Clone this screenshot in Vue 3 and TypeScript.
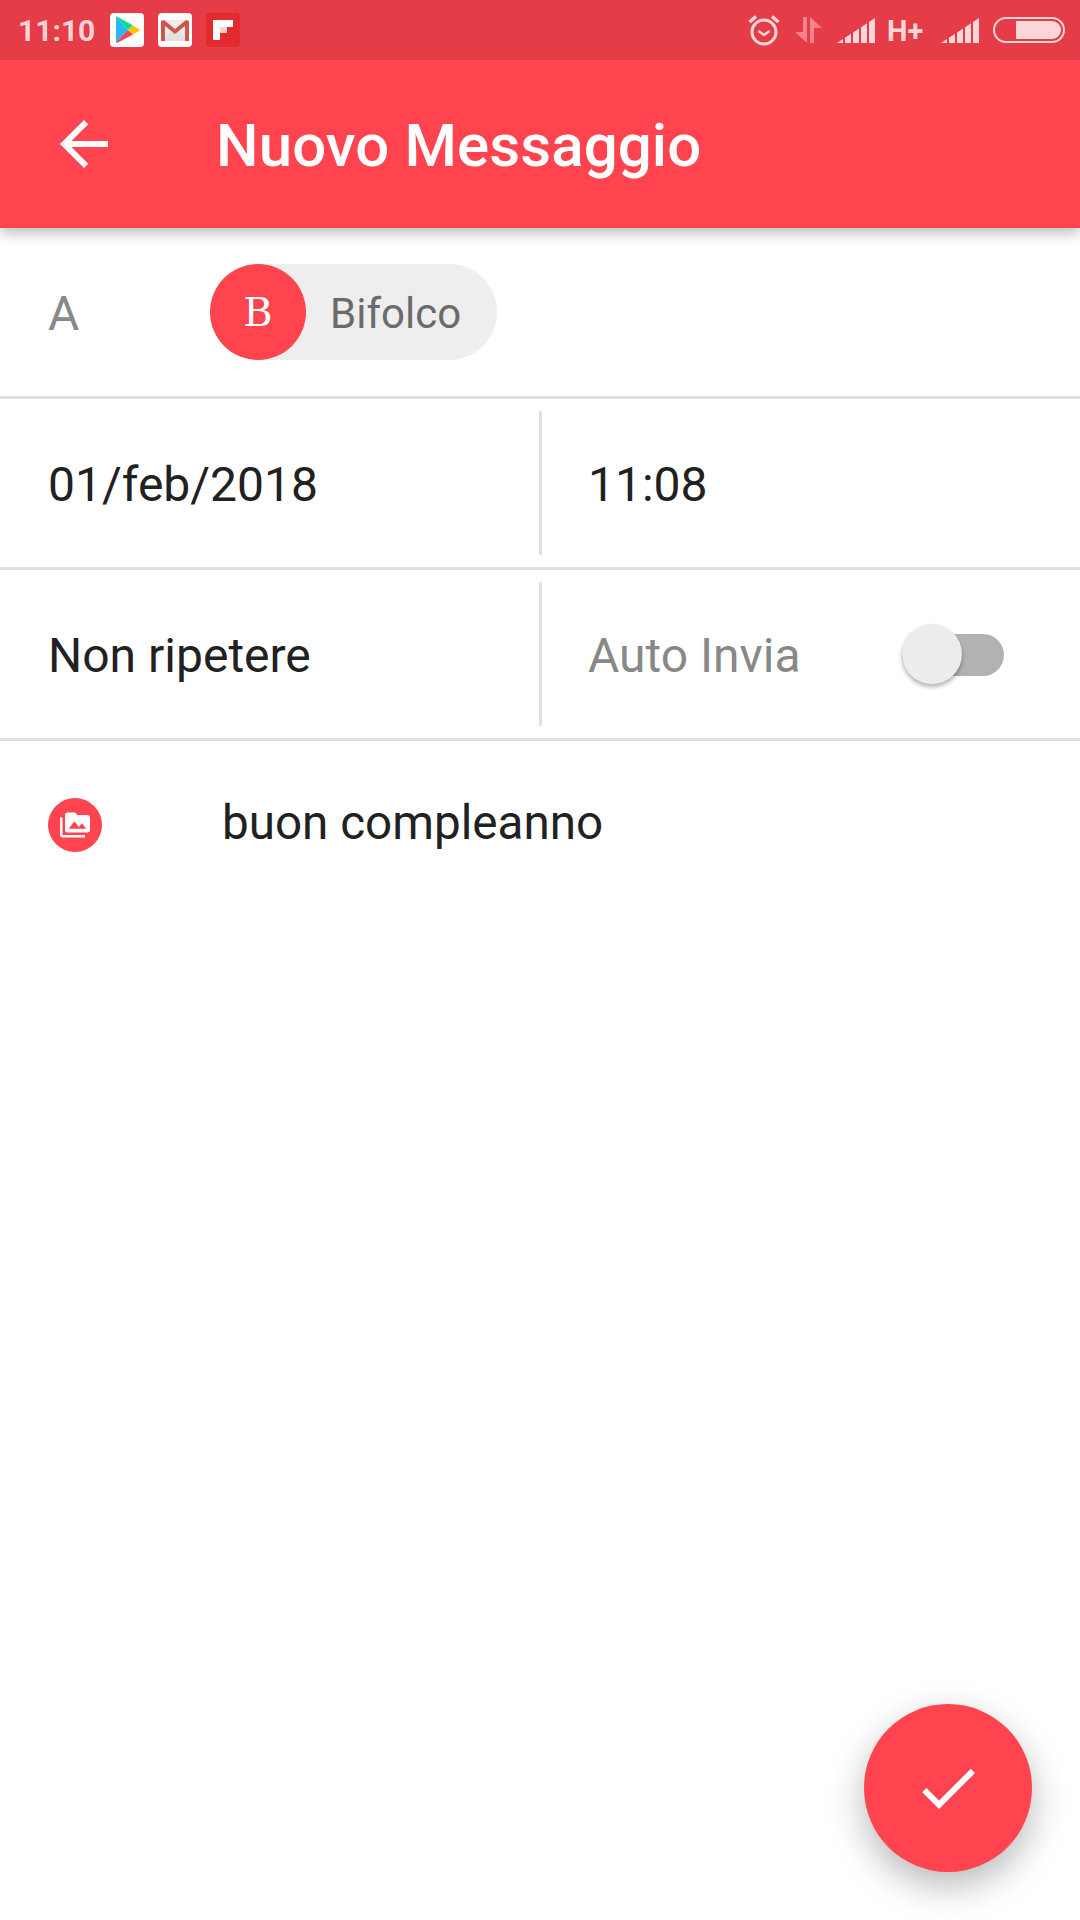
<script setup lang="ts">
const wedge = [
  'M0 25 L6 21 L6 25 Z',
  'M8 25 L8 19.700 L14 15.800 L14 25 Z',
  'M16 25 L16 14.500 L22 10.500 L22 25 Z',
  'M24 25 L24 9.200 L30 5.300 L30 25 Z',
  'M32 25 L32 4 L38 0 L38 25 Z',
]
</script>

<template>
  <div class="screen">
    <div class="status-bar">
      <span class="clock">11:10</span>
      <div class="app-icons">
        <svg class="app-icon" viewBox="0 0 34 34">
          <rect width="34" height="34" rx="4" fill="#fff" />
          <path d="M6 4 L18 17 L6 29 Z" fill="#29b6f6" />
          <path d="M6 4 L18 17 L23 12.500 L7 3.500 Z" fill="#00e08a" />
          <path d="M6 29 L18 17 L23 21.500 L7 30 Z" fill="#ef4452" />
          <path d="M23 12.500 L29 16 Q30 17 29 18 L23 21.500 L18 17 Z" fill="#ffc400" />
        </svg>
        <svg class="app-icon" viewBox="0 0 34 34">
          <rect width="34" height="34" rx="4" fill="#fff" />
          <rect x="3" y="7" width="28" height="21" rx="1.500" fill="#eeeeee" />
          <path d="M3 28 L14 17 L17 19 L20 17 L31 28 Z" fill="#e2e2e2" />
          <path d="M3 8 L3 28 L7 28 L7 13 L17 21 L27 13 L27 28 L31 28 L31 8 L28 7 L17 16 L6 7 Z" fill="#d0554a" />
        </svg>
        <svg class="app-icon" viewBox="0 0 34 34">
          <rect width="34" height="34" rx="4" fill="#e22b2d" />
          <rect x="7" y="7" width="7" height="20" fill="#fff" />
          <rect x="14" y="7" width="13" height="7" fill="#fff" />
          <rect x="14" y="14" width="7" height="6" fill="#fbd0d0" />
        </svg>
      </div>
      <div class="status-right">
        <svg class="st-alarm" viewBox="0 0 32 32" fill="none" stroke="#fbd6d9">
          <circle cx="16" cy="18" r="12" stroke-width="3" />
          <path d="M10.500 17 L16 21 L21.500 17" stroke-width="2.500" />
          <path d="M1.500 8 L8 2.500 M30.500 8 L24 2.500" stroke-width="3.500" />
        </svg>
        <svg class="st-data" viewBox="0 0 27 26">
          <path d="M0 15 L8 15 L8 0 L12 0 L12 26 Z" fill="#f4838b" />
          <path d="M15 0 L27 11 L19 11 L19 26 L15 26 Z" fill="#f4838b" />
        </svg>
        <svg class="signal" viewBox="0 0 38 25">
          <path v-for="d in wedge" :key="d" :d="d" fill="#fbd6d9" />
        </svg>
        <span class="hplus">H+</span>
        <svg class="signal" viewBox="0 0 38 25">
          <path v-for="d in wedge" :key="d" :d="d" fill="#fbd6d9" />
        </svg>
        <div class="battery"><div class="battery-fill"></div></div>
      </div>
    </div>

    <header class="toolbar">
      <svg class="back" viewBox="0 0 24 24">
        <path d="M20 11H7.830l5.590-5.590L12 4l-8 8 8 8 1.410-1.410L7.830 13H20v-2z" fill="#fff" />
      </svg>
      <h1 class="title">Nuovo Messaggio</h1>
    </header>

    <section class="row to-row">
      <span class="to-label">A</span>
      <div class="chip">
        <span class="avatar">B</span>
        <span class="chip-text">Bifolco</span>
      </div>
    </section>

    <section class="row split">
      <div class="cell first"><span class="value">01/feb/2018</span></div>
      <div class="sep"></div>
      <div class="cell"><span class="value">11:08</span></div>
    </section>

    <section class="row split">
      <div class="cell first"><span class="value">Non ripetere</span></div>
      <div class="sep"></div>
      <div class="cell auto">
        <span class="muted">Auto Invia</span>
        <div class="switch"><div class="knob"></div></div>
      </div>
    </section>

    <section class="message">
      <div class="media-btn">
        <svg viewBox="0 0 24 24">
          <path
            d="M2 6H0v5h.010L0 20c0 1.100.900 2 2 2h18v-2H2V6zm20-2h-8l-2-2H6c-1.100 0-1.990.900-1.990 2L4 16c0 1.100.900 2 2 2h16c1.100 0 2-.900 2-2V6c0-1.100-.900-2-2-2zM7 15l4.500-6 3.500 4.510 2.500-3.010L21 15H7z"
            fill="#fff"
          />
        </svg>
      </div>
      <span class="message-text">buon compleanno</span>
    </section>

    <button class="fab" type="button" aria-label="Conferma">
      <svg viewBox="0 0 24 24">
        <path d="M9 16.170L4.830 12l-1.410 1.410L9 19 21 7l-1.410-1.410z" fill="#fff" />
      </svg>
    </button>
  </div>
</template>

<style>
html, body { margin: 0; background: #fff; }
</style>

<style scoped>
.screen {
  position: relative;
  width: 1080px;
  height: 1920px;
  overflow: hidden;
  background: #fff;
  font-family: Roboto, "Liberation Sans", sans-serif;
}

.status-bar {
  position: relative;
  z-index: 3;
  height: 60px;
  display: flex;
  align-items: center;
  background: #e53c47;
  padding: 0 15px 0 18px;
  box-sizing: border-box;
}
.clock {
  font-size: 30px;
  font-weight: 700;
  color: #fbd3d6;
  width: 92px;
}
.app-icons { display: flex; gap: 14px; }
.app-icon { width: 34px; height: 34px; display: block; }
.status-right {
  margin-left: auto;
  display: flex;
  align-items: center;
}
.st-alarm { width: 32px; height: 32px; margin-right: 15px; }
.st-data { width: 27px; height: 26px; margin-right: 15px; }
.signal { width: 38px; height: 25px; display: block; margin-top: 1px; }
.hplus {
  width: 36px;
  margin: 2px 18px 0 12px;
  font-size: 29px;
  font-weight: 700;
  color: #fbd6d9;
  line-height: 1;
  white-space: nowrap;
}
.battery {
  width: 72px;
  height: 26px;
  margin-left: 14px;
  box-sizing: border-box;
  border: 2px solid #fbd6d9;
  border-radius: 13px;
  display: flex;
  justify-content: flex-end;
  padding: 2px;
}
.battery-fill {
  width: 45px;
  height: 100%;
  background: #fbd6d9;
  border-radius: 0 9px 9px 0;
}

.toolbar {
  position: relative;
  z-index: 2;
  height: 168px;
  display: flex;
  align-items: center;
  background: #ff434f;
  padding-left: 48px;
  box-shadow: 0 4px 14px rgba(0, 0, 0, 0.3);
}
.back { width: 72px; height: 72px; display: block; }
.title {
  margin: 0 0 0 96px;
  padding-top: 2px;
  font-size: 60px;
  font-weight: 500;
  letter-spacing: 0.1px;
  color: #fff;
}

.row {
  height: 171px;
  box-sizing: border-box;
  border-bottom: 3px solid #e1e1e1;
  display: flex;
  align-items: center;
}
.to-row { padding-left: 48px; }
.to-label {
  width: 162px;
  padding-top: 2px;
  font-size: 48px;
  color: #888;
}
.chip {
  height: 96px;
  display: flex;
  align-items: center;
  gap: 24px;
  padding-right: 36px;
  border-radius: 48px;
  background: #eee;
}
.avatar {
  width: 96px;
  height: 96px;
  border-radius: 50%;
  background: #ff434f;
  color: #fff;
  display: flex;
  align-items: center;
  justify-content: center;
  font-family: "DejaVu Serif", serif;
  font-size: 40px;
}
.chip-text { padding-top: 2px; font-size: 42px; color: #6b6b6b; }

.split { align-items: stretch; }
.cell {
  flex: 1;
  display: flex;
  align-items: center;
  padding-left: 46px;
}
.cell.first { flex: 0 0 539px; box-sizing: border-box; padding-left: 48px; }
.sep { width: 3px; margin: 12px 0; background: #e1e1e1; }
.value { padding-top: 2px; font-size: 48px; color: #212121; }
.muted { padding-top: 2px; font-size: 48px; color: #888; }
.auto { justify-content: space-between; padding-right: 76px; }
.switch {
  position: relative;
  width: 102px;
  height: 42px;
  margin-top: 2px;
  border-radius: 21px;
  background: #b2b2b2;
}
.knob {
  position: absolute;
  left: 0;
  top: -10px;
  width: 60px;
  height: 60px;
  border-radius: 50%;
  background: #ececec;
  box-shadow: 0 3px 4px rgba(0, 0, 0, 0.3);
}

.message {
  height: 168px;
  display: flex;
  align-items: center;
  gap: 120px;
  padding-left: 48px;
}
.message-text {
  padding-bottom: 4px;
  font-size: 47.6px;
  color: #212121;
}
.media-btn {
  width: 54px;
  height: 54px;
  border-radius: 50%;
  background: #ff434f;
  display: flex;
  align-items: center;
  justify-content: center;
}
.media-btn svg { width: 30px; height: 30px; }

.fab {
  position: absolute;
  right: 48px;
  bottom: 48px;
  width: 168px;
  height: 168px;
  padding: 0;
  border: 0;
  border-radius: 50%;
  background: #ff434f;
  display: flex;
  align-items: center;
  justify-content: center;
  box-shadow: 0 14px 36px rgba(0, 0, 0, 0.28);
}
.fab svg { width: 72px; height: 72px; }
</style>
